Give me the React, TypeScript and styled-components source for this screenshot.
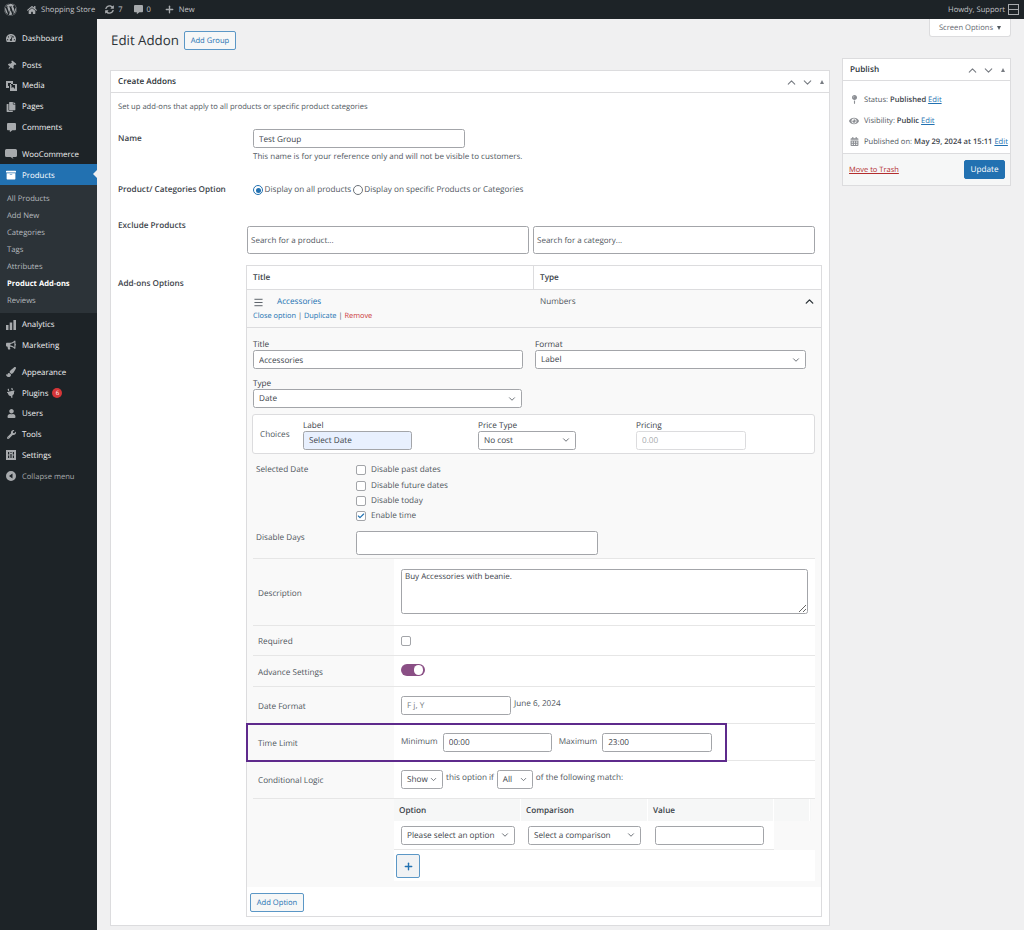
import React from "react";
import styled, { createGlobalStyle } from "styled-components";
import { ChevronDown, ChevronUp, Menu, Plus, Check } from "lucide-react";
import {
  FaWordpress, FaHome, FaCommentAlt, FaTachometerAlt, FaThumbtack, FaCopy, FaArchive,
  FaBullhorn, FaPaintBrush, FaPlug, FaUser, FaWrench, FaSyncAlt, FaMapPin, FaEye, FaCalendarAlt,
} from "react-icons/fa";

const FONT = `"Open Sans", "Noto Sans", sans-serif`;
const LINE = "#a3a5a9";

const Global = createGlobalStyle`
  html, body { margin: 0; padding: 0; height: 930px; overflow: hidden; background: #f0f0f1; }
  body { font-family: ${FONT}; font-size: 8.2px; line-height: 12px; color: #50575e; text-rendering: geometricPrecision; }
  * { box-sizing: border-box; }
`;

const TopBar = styled.header`
  height: 19px; background: #1d2327; color: #c3c4c7; display: flex; align-items: center;
  padding: 0 5px 0 4px; font-size: 7.6px;
`;
const BarItem = styled.span<{ $ml?: number; $dim?: boolean }>`
  display: inline-flex; align-items: center; gap: 4px; margin-left: ${p => p.$ml ?? 0}px; color: ${p => (p.$dim ? "#787c82" : "#c3c4c7")};
  svg { color: #a7aaad; flex: none; }
`;
const BarSpacer = styled.div`flex: 1;`;
const Avatar = styled.span`
  width: 11px; height: 11px; border: 1px solid #a7aaad; margin-left: 3px; display: inline-block;
  background: linear-gradient(#1d2327 0 45%, #a7aaad 45% 55%, #1d2327 55%);
`;

const Layout = styled.div`display: flex; height: 911px;`;
const Sidebar = styled.nav`
  width: 97px; flex: none; background: #1d2327; padding-top: 8px; color: #f0f0f1;
`;
const MenuItem = styled.div<{ $active?: boolean; $gap?: number; $dim?: boolean }>`
  position: relative; height: 20.8px; display: flex; align-items: center; padding: 3px 0 0 6px; gap: 6px;
  margin-top: ${p => p.$gap ?? 0}px;
  background: ${p => (p.$active ? "#2271b1" : "transparent")};
  color: ${p => (p.$active ? "#fff" : p.$dim ? "#a7aaad" : "#f0f0f1")};
  font-size: ${p => (p.$dim ? 7.6 : 7.9)}px;
  svg { color: ${p => (p.$active ? "#fff" : "#a7aaad")}; flex: none; }
`;
const IconSlot = styled.span`width: 10px; height: 12px; display: inline-flex; align-items: center; justify-content: center; margin-top: -1px;`;
const PinIcon = styled(FaThumbtack)`transform: rotate(40deg);`;
const PlugIcon = styled(FaPlug)`transform: rotate(-12deg);`;
const ActiveArrow = styled.span`
  position: absolute; right: 0; top: 6px; width: 0; height: 0;
  border-top: 4.5px solid transparent; border-bottom: 4.5px solid transparent; border-right: 4.5px solid #f0f0f1;
`;
const SubMenu = styled.div`background: #2c3338; padding: 4px 0 5px;`;
const SubItem = styled.div<{ $current?: boolean }>`
  height: 17.1px; display: flex; align-items: center; padding: 3px 0 0 7px; font-size: ${p => (p.$current ? 7.6 : 7.7)}px;
  color: ${p => (p.$current ? "#fff" : "#b4b9be")}; font-weight: ${p => (p.$current ? 700 : 400)};
`;
const Badge = styled.span`
  width: 10px; height: 10px; border-radius: 50%; background: #d63638; color: #fff; font-size: 6px;
  display: inline-flex; align-items: center; justify-content: center; margin: -2px 0 0 -2px;
`;

const Content = styled.main`position: relative; flex: 1; padding: 12px 13px 0; min-width: 0;`;
const ScreenTab = styled.div`
  position: absolute; right: 13px; top: 0; width: 82px; height: 18px; background: #fff; padding-top: 1px;
  border: 1px solid #dcdcde; border-top: 0; border-radius: 0 0 3px 3px; color: #646970; font-size: 7.6px;
  display: flex; align-items: center; justify-content: center; gap: 4px;
`;
const Caret = styled.span`
  width: 0; height: 0; border-left: 2.5px solid transparent; border-right: 2.5px solid transparent;
  border-top: 4px solid #50575e;
`;
const TitleRow = styled.div`display: flex; align-items: center; height: 18px; gap: 5px;`;
const Title = styled.h1`margin: 0; font-size: 13.3px; font-weight: 400; color: #2c3338; line-height: 18px; margin-left: 1px;`;
const OutlineButton = styled.button<{ $w: number }>`
  display: block; width: ${p => p.$w}px; height: 19px; padding: 1px 0 0; font: 400 7.6px ${FONT}; color: #2271b1; background: #f6f7f7;
  border: 1px solid #5b97c6; border-radius: 2px; white-space: nowrap; text-rendering: geometricPrecision;
`;
const Columns = styled.div`display: grid; grid-template-columns: 720px 169px; column-gap: 12px; margin-top: 9px; align-items: start;`;
const MainCol = styled.div`padding-top: 12px;`;
const Box = styled.section<{ $pb?: number }>`
  background: #fff; border: 1px solid #dcdcde; padding-bottom: ${p => p.$pb ?? 0}px;
`;
const BoxHead = styled.div`
  height: 22px; display: flex; align-items: center; justify-content: space-between; border-bottom: 1px solid #dcdcde;
  padding: 1px 5px 0 7px; font-weight: 600; color: #2c3338; font-size: 8.2px;
`;
const Handles = styled.span`display: inline-flex; align-items: center; gap: 3px; svg { color: #787c82; }`;
const SmallUp = styled.span`
  width: 0; height: 0; margin-left: 3px; border-left: 2.5px solid transparent; border-right: 2.5px solid transparent;
  border-bottom: 4px solid #787c82;
`;
const Intro = styled.div`height: 26px; display: flex; align-items: center; padding: 2px 0 0 7px; font-size: 7.6px;`;
const FormRow = styled.div<{ $mt: number }>`
  display: grid; grid-template-columns: 135px 1fr; margin-top: ${p => p.$mt}px; padding-left: 7px;
`;
const FormLabel = styled.div<{ $pt?: number }>`
  font-weight: 600; color: #3c434a; padding-top: ${p => p.$pt ?? 1}px; line-height: 12px;
`;
const WideRow = styled(FormRow)`grid-template-columns: 128px 1fr;`;
const Input = styled.input<{ $w: number; $h?: number; $bg?: string }>`
  width: ${p => p.$w}px; height: ${p => p.$h ?? 19}px; border: 1px solid ${LINE}; border-radius: 2.5px;
  background: ${p => p.$bg ?? "#fff"}; font: 400 8.2px ${FONT}; color: #3c434a; padding: 1px 5px 0; display: block; flex: none; outline: none;
  text-rendering: geometricPrecision;
  &::placeholder { color: #787c82; opacity: 1; }
  &:disabled { border-color: #dcdcde; background: #fff; }
  &:disabled::placeholder { color: #a7aaad; }
`;
const Help = styled.div`margin-top: 3px; color: #50575e; font-size: 8px;`;
const RadioRow = styled.div`display: flex; align-items: center; height: 13px; padding-top: 1px; gap: 1.5px;`;
const Radio = styled.span<{ $on?: boolean }>`
  width: 10px; height: 10px; border-radius: 50%; border: 1px solid ${p => (p.$on ? "#2271b1" : "#6c7278")}; background: #fff;
  display: inline-flex; align-items: center; justify-content: center; flex: none;
  &::after { content: ""; width: 5px; height: 5px; border-radius: 50%; background: ${p => (p.$on ? "#2271b1" : "transparent")}; }
`;
const SearchPair = styled.div`display: flex; gap: 4px; padding: 7px 0 0 1px;`;
const SearchBox = styled.div`
  width: 282px; height: 28px; background: #fff; border: 1px solid ${LINE}; border-radius: 2.5px;
  padding: 1px 0 0 3px; display: flex; align-items: center; color: #50575e; font-size: 8px;
`;

const Table = styled.div`width: 576px; border: 1px solid #dcdcde; background: #fff;`;
const TableHead = styled.div`
  display: grid; grid-template-columns: 287px 1fr; height: 24px; border-bottom: 1px solid #dcdcde; font-weight: 600; color: #3c434a;
`;
const HeadCell = styled.div<{ $line?: boolean }>`
  display: flex; align-items: center; padding: 1px 0 0 6px; border-right: ${p => (p.$line ? "1px solid #dcdcde" : "0")};
`;
const OptionHead = styled.div`
  position: relative; display: grid; grid-template-columns: 288px 1fr; height: 38px; background: #f9f9f9; border-bottom: 1px solid #dcdcde;
`;
const OptionLeft = styled.div`padding: 6px 0 0 6px;`;
const OptionName = styled.div`display: flex; align-items: center; height: 12px; gap: 13px; color: #2271b1; font-weight: 500; svg { color: #50575e; }`;
const OptionLinks = styled.div`margin-top: 2px; color: #50575e; font-size: 7.4px;`;
const LinkText = styled.a<{ $red?: boolean }>`color: ${p => (p.$red ? "#cc3a3c" : "#2271b1")}; text-decoration: none;`;
const OptionType = styled.div`padding: 6px 5px 0; color: #50575e; display: flex; justify-content: space-between; align-items: flex-start; svg { color: #2c3338; margin-top: -1px; }`;
const Panel = styled.div`background: #f9f9f9; padding: 10px 6px 6px;`;
const TwoFields = styled.div`display: grid; grid-template-columns: 270px 271px; column-gap: 12px;`;
const FieldLabel = styled.div`height: 12px; line-height: 14px; color: #3c434a;`;
const TypeField = styled.div`margin-top: 8px; margin-bottom: 5.5px;`;
const SelectBox = styled.div<{ $w: number; $h?: number }>`
  width: ${p => p.$w}px; height: ${p => p.$h ?? 19}px; border: 1px solid ${LINE}; border-radius: 2.5px; background: #fff; color: #3c434a;
  display: flex; align-items: center; justify-content: space-between; padding: 1px 4px 0 5px; flex: none;
  svg { color: #50575e; flex: none; margin-top: -1px; }
`;
const ChoicesBox = styled.div`
  width: 563px; height: 40.5px; margin-left: -1px; background: #fff; border: 1px solid #dcdcde; border-radius: 3px; padding: 4px 0 0 7px;
  display: grid; grid-template-columns: 43px 175px 158px 110px; align-content: start;
`;
const ChoicesText = styled.div`align-self: center; padding-top: 2px;`;
const ChoiceField = styled.div``;
const SelectedDate = styled.div`display: grid; grid-template-columns: 100px 1fr; padding-left: 3px; margin-top: 8px;`;
const CheckList = styled.div`display: flex; flex-direction: column;`;
const CheckRow = styled.div`display: flex; align-items: center; gap: 5px; height: 15.4px; padding-top: 1px; color: #50575e;`;
const CheckBox = styled.span`
  width: 10px; height: 10px; border: 1px solid ${LINE}; border-radius: 2px; background: #fff; flex: none;
  display: inline-flex; align-items: center; justify-content: center; svg { color: #2271b1; }
`;
const SideLabel = styled.div`line-height: 16px;`;
const DisableDays = styled.div`display: grid; grid-template-columns: 100px 1fr; align-items: start; padding-left: 3px; margin-top: 7.5px; margin-bottom: 3px;`;
const DaysLabel = styled.div`padding-top: 1px;`;
const SettingRow = styled.div<{ $h: number }>`
  position: relative; display: grid; grid-template-columns: 141px 1fr; height: ${p => p.$h}px; border-top: 1px solid #e6e6e6;
`;
const SettingLabel = styled.div`display: flex; align-items: center; padding: 3px 0 0 5px; color: #50575e;`;
const SettingValue = styled.div`
  background: #fff; display: flex; align-items: center; padding-left: 7px; gap: 3px; color: #50575e;
`;
const TextArea = styled.textarea`
  width: 407px; height: 45px; margin-top: -2px; border: 1px solid ${LINE}; border-radius: 2.5px; resize: vertical;
  font: 400 8px ${FONT}; color: #3c434a; padding: 1px 3px; outline: none; text-rendering: geometricPrecision;
`;
const Toggle = styled.span`
  width: 24px; height: 12.5px; border-radius: 7px; background: #8a4f85; position: relative; display: inline-block; margin-top: -2px;
  &::after { content: ""; position: absolute; right: 2px; top: 1.5px; width: 9.5px; height: 9.5px; border-radius: 50%; background: #fff; }
`;
const TimeLabel = styled.span<{ $ml?: number }>`margin-left: ${p => p.$ml ?? 0}px; margin-right: 2px; margin-top: -1px;`;
const Highlight = styled.div`
  position: absolute; z-index: 2; left: -7px; top: -1px; width: 481px; height: 39px; border: 2px solid #5e2a8c; pointer-events: none;
`;
const InlineText = styled.span`margin-top: -3px;`;
const SubRow = styled.div`display: grid; grid-template-columns: 141px 1fr; border-top: 1px solid #e6e6e6;`;
const SubValue = styled.div`background: transparent;`;
const ConditionHead = styled.div`
  display: grid; grid-template-columns: 127px 127px 126px 36px; height: 22px; background: #f6f7f7; font-weight: 600; color: #3c434a; width: 417px;
`;
const ConditionHeadCell = styled.div`display: flex; align-items: center; padding: 1px 0 0 5px; border-right: 1px solid #fff;`;
const ConditionRow = styled.div`
  display: grid; grid-template-columns: 127px 127px 126px; height: 29px; width: 380px; background: #fff; border-bottom: 1px solid #e6e6e6; align-items: center;
`;
const ConditionCell = styled.div`padding-left: 7px;`;
const AddArea = styled.div`background: #fff; height: 31px; padding: 4px 0 0 2px; width: 421px;`;
const PlusButton = styled.button`
  width: 24px; height: 24px; background: #f0f2f4; border: 1px solid #5b97c6; border-radius: 2px; padding: 0;
  display: flex; align-items: center; justify-content: center; svg { color: #2271b1; }
`;
const TableFoot = styled.div`padding: 6px 0 4px 3px;`;

const PublishRows = styled.div`padding: 8px 0 1px;`;
const PublishRow = styled.div`
  height: 21px; display: flex; align-items: center; padding-left: 6px; gap: 5px; color: #50575e; white-space: nowrap; font-size: 7.6px;
  svg { color: #8c8f94; flex: none; } b { font-weight: 600; color: #3c434a; }
`;
const IconBox = styled.span`width: 10px; display: inline-flex; justify-content: center; flex: none;`;
const Under = styled.a`color: #2271b1; text-decoration: underline;`;
const PublishFoot = styled.div`
  height: 32px; background: #f6f7f7; border-top: 1px solid #dcdcde; display: flex; align-items: center; justify-content: space-between; padding: 0 5px 0 6px;
`;
const Trash = styled.a`color: #b32d2e; text-decoration: underline; font-size: 7.5px;`;
const PrimaryButton = styled.button`
  height: 19px; width: 41px; background: #2271b1; color: #fff; border: 1px solid #2271b1; border-radius: 2px; font: 400 8.2px ${FONT}; padding: 0;
  text-rendering: geometricPrecision;
`;

const WooIcon = () => (
  <svg width="12" height="10" viewBox="0 0 12 10"><path d="M1.5 0h9A1.5 1.5 0 0 1 12 1.5v5A1.5 1.5 0 0 1 10.500 8H7.500l1 2-3-2h-4A1.500 1.500 0 0 1 0 6.500v-5A1.500 1.500 0 0 1 1.500 0z" fill="currentColor" /></svg>
);
const MediaIcon = () => (
  <svg width="11" height="10" viewBox="0 0 11 10"><path d="M0 0h7v4H5V2H2v3h1v2H0zM4 3h7v7H4zm1.500 1v3l1.500-1 2 2V4z" fill="currentColor" fillRule="evenodd" /></svg>
);
const BarsIcon = () => (
  <svg width="10" height="10" viewBox="0 0 10 10"><path d="M0 5h2.500v5H0zM3.700 2.500h2.500V10H3.700zM7.400 0H10v10H7.400z" fill="currentColor" /></svg>
);
const CollapseIcon = () => (
  <svg width="10" height="10" viewBox="0 0 10 10"><path d="M5 0a5 5 0 1 1 0 10A5 5 0 0 1 5 0zm1.500 2.500L3 5l3.500 2.500z" fill="currentColor" fillRule="evenodd" /></svg>
);
const SettingsIcon = () => (
  <svg width="10" height="10" viewBox="0 0 10 10"><path d="M0 0h10v10H0zm2 5.500V8h1.200V5.500zM2 2v2.500h1.200V2zm4.800 3.500V8H8V5.500zm0-3.500v2.500H8V2zM4.400 2v1h1.200V2zm0 2v4h1.200V4z" fill="currentColor" fillRule="evenodd" /></svg>
);

type Entry = { label: React.ReactNode; icon: React.ReactNode; gap?: number };
const firstMenu: Entry[] = [
  { label: "Dashboard", icon: <FaTachometerAlt size={10} /> },
  { label: "Posts", icon: <PinIcon size={9} />, gap: 6 },
  { label: "Media", icon: <MediaIcon /> },
  { label: "Pages", icon: <FaCopy size={10} /> },
  { label: "Comments", icon: <FaCommentAlt size={9} /> },
  { label: "WooCommerce", icon: <WooIcon />, gap: 6 },
];
const subMenu = ["All Products", "Add New", "Categories", "Tags", "Attributes", "Product Add-ons", "Reviews"];
const lastMenu: Entry[] = [
  { label: "Analytics", icon: <BarsIcon /> },
  { label: "Marketing", icon: <FaBullhorn size={10} /> },
  { label: "Appearance", icon: <FaPaintBrush size={10} />, gap: 6 },
  { label: "Plugins", icon: <PlugIcon size={10} /> },
  { label: "Users", icon: <FaUser size={9} /> },
  { label: "Tools", icon: <FaWrench size={9} /> },
  { label: "Settings", icon: <SettingsIcon /> },
];

const HandleSet = () => (
  <Handles>
    <ChevronUp size={13} strokeWidth={2} />
    <ChevronDown size={13} strokeWidth={2} />
    <SmallUp />
  </Handles>
);

export default function App() {
  return (
    <>
      <Global />
      <TopBar>
        <BarItem><FaWordpress size={13} /></BarItem>
        <BarItem $ml={10}><FaHome size={10} />Shopping Store</BarItem>
        <BarItem $ml={10}><FaSyncAlt size={9} />7</BarItem>
        <BarItem $ml={11}><FaCommentAlt size={9} /><span>0</span></BarItem>
        <BarItem $ml={13}><Plus size={11} strokeWidth={3} />New</BarItem>
        <BarSpacer />
        <BarItem>Howdy, Support</BarItem>
        <Avatar />
      </TopBar>
      <Layout>
        <Sidebar>
          {firstMenu.map((m, i) => (
            <MenuItem key={i} $gap={m.gap}><IconSlot>{m.icon}</IconSlot>{m.label}</MenuItem>
          ))}
          <MenuItem $active><IconSlot><FaArchive size={10} /></IconSlot>Products<ActiveArrow /></MenuItem>
          <SubMenu>
            {subMenu.map(s => <SubItem key={s} $current={s === "Product Add-ons"}>{s}</SubItem>)}
          </SubMenu>
          {lastMenu.map((m, i) => (
            <MenuItem key={i} $gap={m.gap}>
              <IconSlot>{m.icon}</IconSlot>{m.label}{i === 3 && <Badge>6</Badge>}
            </MenuItem>
          ))}
          <MenuItem $dim><IconSlot><CollapseIcon /></IconSlot>Collapse menu</MenuItem>
        </Sidebar>
        <Content>
          <ScreenTab>Screen Options <Caret /></ScreenTab>
          <TitleRow>
            <Title>Edit Addon</Title>
            <OutlineButton $w={52}>Add Group</OutlineButton>
          </TitleRow>
          <Columns>
            <MainCol>
              <Box $pb={8}>
                <BoxHead>Create Addons<HandleSet /></BoxHead>
                <Intro>Set up add-ons that apply to all products or specific product categories</Intro>
                <FormRow $mt={10}>
                  <FormLabel $pt={4}>Name</FormLabel>
                  <div>
                    <Input $w={212} defaultValue="Test Group" />
                    <Help>This name is for your reference only and will not be visible to customers.</Help>
                  </div>
                </FormRow>
                <FormRow $mt={20}>
                  <FormLabel>Product/ Categories Option</FormLabel>
                  <RadioRow>
                    <Radio $on /> <span>Display on all products</span>
                    <Radio /> <span>Display on specific Products or Categories</span>
                  </RadioRow>
                </FormRow>
                <WideRow $mt={23}>
                  <FormLabel>Exclude Products</FormLabel>
                  <SearchPair>
                    <SearchBox>Search for a product...</SearchBox>
                    <SearchBox>Search for a category...</SearchBox>
                  </SearchPair>
                </WideRow>
                <WideRow $mt={11}>
                  <FormLabel $pt={13}>Add-ons Options</FormLabel>
                  <Table>
                    <TableHead>
                      <HeadCell $line>Title</HeadCell>
                      <HeadCell>Type</HeadCell>
                    </TableHead>
                    <OptionHead>
                      <OptionLeft>
                        <OptionName><Menu size={11} />Accessories</OptionName>
                        <OptionLinks>
                          <LinkText>Close option</LinkText> | <LinkText>Duplicate</LinkText> | <LinkText $red>Remove</LinkText>
                        </OptionLinks>
                      </OptionLeft>
                      <OptionType>Numbers<ChevronUp size={13} strokeWidth={2.5} /></OptionType>
                    </OptionHead>
                    <Panel>
                      <TwoFields>
                        <div>
                          <FieldLabel>Title</FieldLabel>
                          <Input $w={270} defaultValue="Accessories" />
                        </div>
                        <div>
                          <FieldLabel>Format</FieldLabel>
                          <SelectBox $w={271}>Label<ChevronDown size={10} /></SelectBox>
                        </div>
                      </TwoFields>
                      <TypeField>
                        <FieldLabel>Type</FieldLabel>
                        <SelectBox $w={269}>Date<ChevronDown size={10} /></SelectBox>
                      </TypeField>
                      <ChoicesBox>
                        <ChoicesText>Choices</ChoicesText>
                        <ChoiceField>
                          <FieldLabel>Label</FieldLabel>
                          <Input $w={109} $bg="#e8f0fe" defaultValue="Select Date" />
                        </ChoiceField>
                        <ChoiceField>
                          <FieldLabel>Price Type</FieldLabel>
                          <SelectBox $w={98}>No cost<ChevronDown size={10} /></SelectBox>
                        </ChoiceField>
                        <ChoiceField>
                          <FieldLabel>Pricing</FieldLabel>
                          <Input $w={110} disabled placeholder="0.00" />
                        </ChoiceField>
                      </ChoicesBox>
                      <SelectedDate>
                        <SideLabel>Selected Date</SideLabel>
                        <CheckList>
                          <CheckRow><CheckBox />Disable past dates</CheckRow>
                          <CheckRow><CheckBox />Disable future dates</CheckRow>
                          <CheckRow><CheckBox />Disable today</CheckRow>
                          <CheckRow><CheckBox><Check size={8} strokeWidth={3.5} /></CheckBox>Enable time</CheckRow>
                        </CheckList>
                      </SelectedDate>
                      <DisableDays>
                        <DaysLabel>Disable Days</DaysLabel>
                        <Input $w={242} $h={24} />
                      </DisableDays>
                      <SettingRow $h={67}>
                        <SettingLabel>Description</SettingLabel>
                        <SettingValue><TextArea defaultValue="Buy Accessories with beanie." /></SettingValue>
                      </SettingRow>
                      <SettingRow $h={30}>
                        <SettingLabel>Required</SettingLabel>
                        <SettingValue><CheckBox /></SettingValue>
                      </SettingRow>
                      <SettingRow $h={31}>
                        <SettingLabel>Advance Settings</SettingLabel>
                        <SettingValue><Toggle /></SettingValue>
                      </SettingRow>
                      <SettingRow $h={37}>
                        <SettingLabel>Date Format</SettingLabel>
                        <SettingValue>
                          <Input $w={110} placeholder="F j, Y" />
                          <InlineText>June 6, 2024</InlineText>
                        </SettingValue>
                      </SettingRow>
                      <SettingRow $h={37}>
                        <SettingLabel>Time Limit</SettingLabel>
                        <SettingValue>
                          <TimeLabel>Minimum</TimeLabel>
                          <Input $w={109} defaultValue="00:00" />
                          <TimeLabel $ml={4}>Maximum</TimeLabel>
                          <Input $w={110} defaultValue="23:00" />
                        </SettingValue>
                        <Highlight />
                      </SettingRow>
                      <SettingRow $h={38}>
                        <SettingLabel>Conditional Logic</SettingLabel>
                        <SettingValue>
                          <SelectBox $w={42}>Show<ChevronDown size={9} /></SelectBox>
                          <InlineText>this option if</InlineText>
                          <SelectBox $w={36}>All<ChevronDown size={9} /></SelectBox>
                          <InlineText>of the following match:</InlineText>
                        </SettingValue>
                      </SettingRow>
                      <SubRow>
                        <div />
                        <SubValue>
                          <ConditionHead>
                            <ConditionHeadCell>Option</ConditionHeadCell>
                            <ConditionHeadCell>Comparison</ConditionHeadCell>
                            <ConditionHeadCell>Value</ConditionHeadCell>
                            <ConditionHeadCell />
                          </ConditionHead>
                          <ConditionRow>
                            <ConditionCell><SelectBox $w={114}>Please select an option<ChevronDown size={10} /></SelectBox></ConditionCell>
                            <ConditionCell><SelectBox $w={113}>Select a comparison<ChevronDown size={10} /></SelectBox></ConditionCell>
                            <ConditionCell><Input $w={109} /></ConditionCell>
                          </ConditionRow>
                          <AddArea><PlusButton><Plus size={11} strokeWidth={3} /></PlusButton></AddArea>
                        </SubValue>
                      </SubRow>
                    </Panel>
                    <TableFoot><OutlineButton $w={54}>Add Option</OutlineButton></TableFoot>
                  </Table>
                </WideRow>
              </Box>
            </MainCol>
            <Box>
              <BoxHead>Publish<HandleSet /></BoxHead>
              <PublishRows>
                <PublishRow><IconBox><FaMapPin size={9} /></IconBox><span>Status: <b>Published</b> <Under>Edit</Under></span></PublishRow>
                <PublishRow><IconBox><FaEye size={10} /></IconBox><span>Visibility: <b>Public</b> <Under>Edit</Under></span></PublishRow>
                <PublishRow><IconBox><FaCalendarAlt size={9} /></IconBox><span>Published on: <b>May 29, 2024 at 15:11</b> <Under>Edit</Under></span></PublishRow>
              </PublishRows>
              <PublishFoot>
                <Trash>Move to Trash</Trash>
                <PrimaryButton>Update</PrimaryButton>
              </PublishFoot>
            </Box>
          </Columns>
        </Content>
      </Layout>
    </>
  );
}
